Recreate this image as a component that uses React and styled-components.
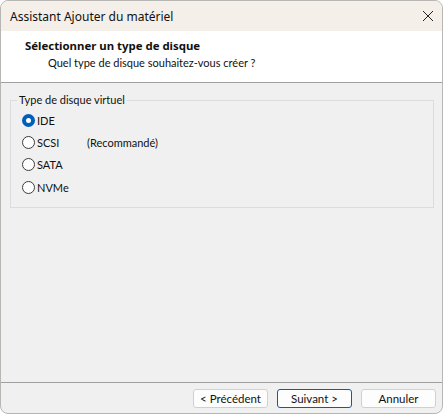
import styled, { createGlobalStyle } from 'styled-components';

const GlobalStyle = createGlobalStyle`
  html, body {
    margin: 0;
    padding: 0;
    background: #ffffff;
  }
  body {
    font-family: 'Lato', 'Noto Sans', 'Liberation Sans', sans-serif;
    font-size: 11px;
    color: #111111;
  }
`;

const options = [
  { id: 'ide', label: 'IDE', checked: true },
  { id: 'scsi', label: 'SCSI', note: '(Recommandé)' },
  { id: 'sata', label: 'SATA' },
  { id: 'nvme', label: 'NVMe' },
];

const Window = styled.div`
  width: 443px;
  height: 414px;
  display: flex;
  flex-direction: column;
  background: #f0f0f0;
  border-radius: 8px;
  overflow: hidden;
  box-sizing: border-box;
  border: 1px solid #b8b6b3;
`;

const TitleBar = styled.div`
  height: 30px;
  flex-shrink: 0;
  display: flex;
  align-items: center;
  justify-content: space-between;
  padding: 0 8px 0 9px;
  background: #f4efe9;
`;

const Title = styled.span`
  font-family: 'Noto Sans', sans-serif;
  font-size: 12px;
`;

const CloseIcon = styled.svg`
  width: 12px;
  height: 12px;
`;

const Header = styled.div`
  height: 52px;
  flex-shrink: 0;
  box-sizing: border-box;
  background: #ffffff;
  border-bottom: 1px solid #a0a0a0;
  padding: 6px 0 0 24px;
`;

const HeaderTitle = styled.div`
  font-family: 'Noto Sans', sans-serif;
  font-weight: 700;
  font-size: 11.4px;
  line-height: 17px;
`;

const HeaderSub = styled.div`
  padding-left: 23px;
  line-height: 17px;
`;

const Content = styled.div`
  flex: 1;
  padding: 10px 8px 0 9px;
`;

const Group = styled.fieldset`
  margin: 0;
  height: 115px;
  box-sizing: border-box;
  border: 1px solid #dcdcdc;
  padding: 2px 0 0 11px;
  display: flex;
  flex-direction: column;
`;

const Legend = styled.legend`
  padding: 0 2px;
  margin-left: -5px;
  line-height: 14px;
`;

const Row = styled.label`
  display: flex;
  align-items: center;
  height: 22.3px;
`;

const Radio = styled.span`
  width: 13px;
  height: 13px;
  box-sizing: border-box;
  border-radius: 50%;
  border: ${p => (p.$checked ? '4px solid #005fb8' : '1px solid #3c3c3c')};
  background: #ffffff;
  margin-right: 2px;
`;

const Name = styled.span`
  width: 50px;
`;

const Footer = styled.div`
  height: 31px;
  flex-shrink: 0;
  box-sizing: border-box;
  border-top: 1px solid #a0a0a0;
  display: flex;
  justify-content: flex-end;
  align-items: flex-start;
  gap: 9px;
  padding: 6px 6px 0 0;
`;

const Button = styled.button`
  width: 75px;
  height: 19px;
  padding: 0;
  font-family: inherit;
  font-size: 11.5px;
  color: #111111;
  background: #fdfdfd;
  border: 1px solid ${p => (p.$default ? '#005fb8' : '#d0d0d0')};
  border-radius: 3px;
  line-height: 16px;
`;

export default function App() {
  return (
    <>
      <GlobalStyle />
      <Window>
        <TitleBar>
          <Title>Assistant Ajouter du matériel</Title>
          <CloseIcon viewBox="0 0 12 12">
            <path d="M1 1 L11 11 M11 1 L1 11" stroke="#222" strokeWidth="1" />
          </CloseIcon>
        </TitleBar>
        <Header>
          <HeaderTitle>Sélectionner un type de disque</HeaderTitle>
          <HeaderSub>Quel type de disque souhaitez-vous créer ?</HeaderSub>
        </Header>
        <Content>
          <Group>
            <Legend>Type de disque virtuel</Legend>
            {options.map(o => (
              <Row key={o.id}>
                <Radio $checked={o.checked} />
                <Name>{o.label}</Name>
                {o.note && <span>{o.note}</span>}
              </Row>
            ))}
          </Group>
        </Content>
        <Footer>
          <Button>&lt; Précédent</Button>
          <Button $default>Suivant &gt;</Button>
          <Button>Annuler</Button>
        </Footer>
      </Window>
    </>
  );
}
